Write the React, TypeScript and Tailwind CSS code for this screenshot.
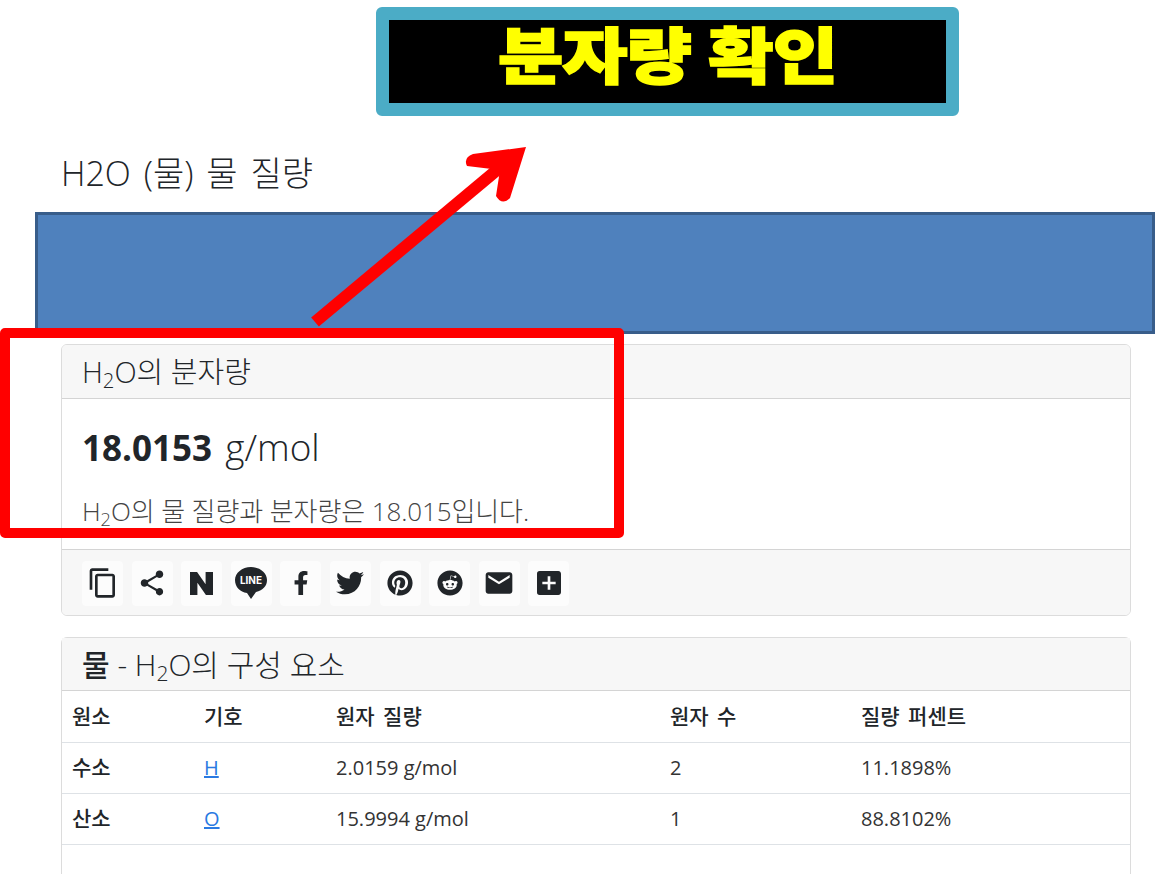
import { MdContentCopy, MdShare, MdEmail, MdAddBox } from "react-icons/md";
import { FaFacebookF, FaTwitter, FaPinterest, FaReddit } from "react-icons/fa";
import { SiNaver } from "react-icons/si";
import type { ReactNode } from "react";

const LineIcon = () => (
  <svg viewBox="0 0 34 38" className="w-[34px] h-[38px]">
    <path d="M17 3C8 3 1 9 1 16c0 7 5 12 12 13l4 6 5-7c7-2 11-6 11-12C33 9 26 3 17 3z" fill="#212529" />
    <text x="17" y="20" textAnchor="middle" fontSize="10" fontWeight="700" fill="#fff" fontFamily="Inter, sans-serif">
      LINE
    </text>
  </svg>
);

const ShareButton = ({ children }: { children: ReactNode }) => (
  <div className="flex h-[45px] w-[41px] items-center justify-center rounded bg-[#fcfcfc] text-[#212529]">
    {children}
  </div>
);

const Sub = () => <sub className="text-[0.7em]">2</sub>;

const rows = [
  { name: "수소", symbol: "H", mass: "2.0159 g/mol", count: "2", percent: "11.1898%" },
  { name: "산소", symbol: "O", mass: "15.9994 g/mol", count: "1", percent: "88.8102%" },
];

export default function App() {
  return (
    <div className="relative h-[874px] overflow-hidden bg-white font-['Open_Sans','Noto_Sans_CJK_KR',sans-serif] text-[#212529]">
      {/* Callout */}
      <div className="ml-[376px] mt-[7px] flex h-[109px] w-[583px] items-center justify-center rounded-md border-[13px] border-[#4bacc6] bg-black pb-[13px]">
        <span className="scale-y-[0.87] text-[71px] font-black leading-none text-[#ffff00] tracking-[-1px] [-webkit-text-stroke:2px_#ffff00]">분자량 확인</span>
      </div>

      <h1 className="ml-[61px] mt-[33px] text-[34px] font-light leading-[48px] [word-spacing:4px]">H2O (물) 물 질량</h1>

      <div className="ml-[35px] mt-[15px] h-[122px] border-[3px] border-[#385d8a] bg-[#4f81bd]" />

      <div className="ml-[61px] mr-[24px] mt-[10px] flex flex-col gap-[21px]">
        {/* Molar mass card */}
        <div className="overflow-hidden rounded-md border border-[#dcdcdc]">
          <div className="flex h-[54px] items-center border-b border-[#d4d4d4] bg-[#f7f7f7] px-[20px] text-[29px] font-light">
            <span>
              H<Sub />O의 분자량
            </span>
          </div>
          <div className="h-[150px] px-[20px] pt-[26px]">
            <p className="text-[35px] leading-[44px]">
              <span className="font-bold">18.0153</span> <span className="ml-[4px] text-[37px] font-light">g/mol</span>
            </p>
            <p className="mt-[23px] text-[26px] font-light leading-[36px] tracking-[-0.1px] text-[#444]">
              H<Sub />O의 물 질량과 분자량은 18.015입니다.
            </p>
          </div>
          <div className="flex h-[66px] items-center gap-[8.6px] border-t border-[#d4d4d4] bg-[#f7f7f7] px-[20px] pt-[1px]">
            <ShareButton>
              <MdContentCopy size={32} />
            </ShareButton>
            <ShareButton>
              <MdShare size={30} />
            </ShareButton>
            <ShareButton>
              <SiNaver size={23} />
            </ShareButton>
            <ShareButton>
              <LineIcon />
            </ShareButton>
            <ShareButton>
              <FaFacebookF size={24} />
            </ShareButton>
            <ShareButton>
              <FaTwitter size={28} />
            </ShareButton>
            <ShareButton>
              <FaPinterest size={26} />
            </ShareButton>
            <ShareButton>
              <FaReddit size={26} />
            </ShareButton>
            <ShareButton>
              <MdEmail size={32} />
            </ShareButton>
            <ShareButton>
              <MdAddBox size={32} />
            </ShareButton>
          </div>
        </div>

        {/* Composition card */}
        <div className="rounded-t-md border border-[#dcdcdc]">
          <div className="flex h-[53px] items-center border-b border-[#d4d4d4] bg-[#f7f7f7] pl-[20px] text-[30px] font-light">
            <span>
              <span className="font-medium">물</span> - H<Sub />O의 구성 요소
            </span>
          </div>
          <table className="w-full table-fixed text-left text-[20px] text-[#333]">
            <colgroup>
              <col className="w-[132px]" />
              <col className="w-[132px]" />
              <col className="w-[334px]" />
              <col className="w-[191px]" />
              <col />
            </colgroup>
            <thead>
              <tr className="h-[51px] border-b border-[#dee2e6] text-[21px] text-[#212529] [word-spacing:3px]">
                <th className="pl-[10px] font-medium">원소</th>
                <th className="pl-[10px] font-medium">기호</th>
                <th className="pl-[10px] font-medium">원자 질량</th>
                <th className="pl-[10px] font-medium">원자 수</th>
                <th className="pl-[10px] font-medium">질량 퍼센트</th>
              </tr>
            </thead>
            <tbody>
              {rows.map((row) => (
                <tr key={row.name} className="h-[51px] border-b border-[#dee2e6]">
                  <th className="pl-[10px] text-[21px] font-medium text-[#212529]">{row.name}</th>
                  <td className="pl-[10px]">
                    <a href="#" className="text-[#2a7ae2] underline">
                      {row.symbol}
                    </a>
                  </td>
                  <td className="pl-[10px]">{row.mass}</td>
                  <td className="pl-[10px]">{row.count}</td>
                  <td className="pl-[10px]">{row.percent}</td>
                </tr>
              ))}
              <tr className="h-[51px]">
                <td colSpan={5} />
              </tr>
            </tbody>
          </table>
        </div>
      </div>

      {/* Red annotation box */}
      <div className="absolute left-0 top-[328px] h-[210px] w-[624px] rounded-[5px] border-[10px] border-[#ff0000]" />

      {/* Red arrow */}
      <svg className="absolute left-0 top-0 h-[874px] w-[1155px]" viewBox="0 0 1155 874" fill="none">
        <path d="M315 322L515 155" stroke="#ff0000" strokeWidth="12" />
        <path d="M526 147L473 154Q463 158 467 166L500 170L496 196Q502 206 510 198Z" fill="#ff0000" />
      </svg>
    </div>
  );
}
